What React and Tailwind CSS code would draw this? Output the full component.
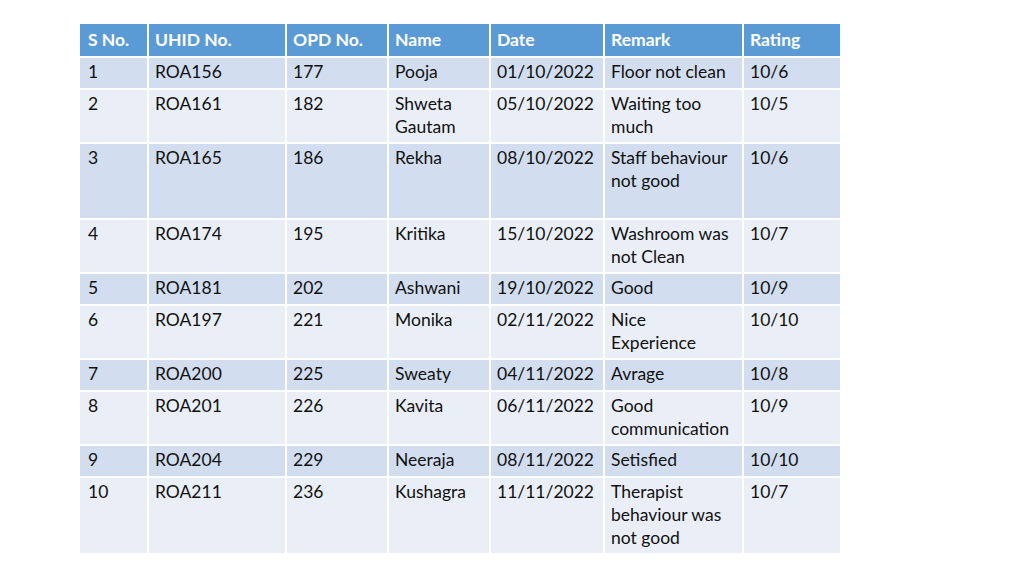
const rows = [
  ["1", "ROA156", "177", "Pooja", "01/10/2022", "Floor not clean", "10/6", "h-[32px]"],
  ["2", "ROA161", "182", "Shweta Gautam", "05/10/2022", "Waiting too much", "10/5", "h-[54px]"],
  ["3", "ROA165", "186", "Rekha", "08/10/2022", "Staff behaviour not good", "10/6", "h-[76px]"],
  ["4", "ROA174", "195", "Kritika", "15/10/2022", "Washroom was not Clean", "10/7", "h-[54px]"],
  ["5", "ROA181", "202", "Ashwani", "19/10/2022", "Good", "10/9", "h-[32px]"],
  ["6", "ROA197", "221", "Monika", "02/11/2022", "Nice Experience", "10/10", "h-[54px]"],
  ["7", "ROA200", "225", "Sweaty", "04/11/2022", "Avrage", "10/8", "h-[32px]"],
  ["8", "ROA201", "226", "Kavita", "06/11/2022", "Good communication", "10/9", "h-[54px]"],
  ["9", "ROA204", "229", "Neeraja", "08/11/2022", "Setisfied", "10/10", "h-[32px]"],
  ["10", "ROA211", "236", "Kushagra", "11/11/2022", "Therapist behaviour was not good", "10/7", "h-[77px]"],
];

const headers = ["S No.", "UHID No.", "OPD No.", "Name", "Date", "Remark", "Rating"];
const widths = ["w-[67px]", "w-[138px]", "w-[102px]", "w-[102px]", "w-[114px]", "w-[139px]", "w-[98px]"];

export default function App() {
  return (
    <div className="w-[1024px] h-[576px] bg-white pt-[24px] pl-[80px]" style={{ fontFamily: "Lato, 'Open Sans', sans-serif" }}>
      <div className="w-[760px] flex flex-col">
        <div className="flex h-[32px] bg-[#5b9bd5]">
          {headers.map((h, i) => (
            <div key={h} className={`${widths[i]} ${i ? "border-l-2 border-white pl-[6px]" : "pl-[8px]"} text-white font-bold text-[17.5px] leading-[23px] pt-[4px]`}>
              {h}
            </div>
          ))}
        </div>
        {rows.map((r, ri) => (
          <div key={ri} className={`flex ${r[7]} border-t-2 border-white ${ri % 2 === 0 ? "bg-[#d2deef]" : "bg-[#eaeff7]"}`}>
            {r.slice(0, 7).map((c, i) => (
              <div key={i} className={`${widths[i]} ${i ? "border-l-2 border-white pl-[6px]" : "pl-[8px]"} text-[#111] text-[17.5px] leading-[23px] pt-[2px] pr-[8px]`}>
                {c}
              </div>
            ))}
          </div>
        ))}
      </div>
    </div>
  );
}
